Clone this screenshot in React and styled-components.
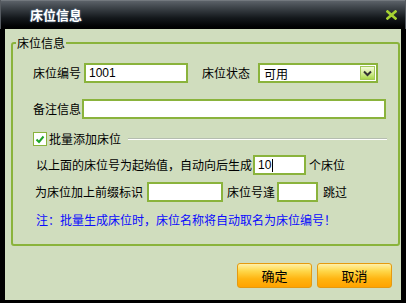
import React from 'react';
import styled, { createGlobalStyle } from 'styled-components';

const GlobalStyle = createGlobalStyle`
  html, body {
    margin: 0;
    padding: 0;
    background: #000;
  }
  body {
    font-family: "Liberation Sans", "Noto Sans CJK SC", sans-serif;
    font-size: 12px;
  }
`;

const Window = styled.div`
  width: 406px;
  height: 303px;
  background: #000;
  display: flex;
  flex-direction: column;
  box-sizing: border-box;
`;

const TitleBar = styled.div`
  height: 29px;
  flex: none;
  display: flex;
  align-items: center;
  justify-content: space-between;
  padding: 0 8px 0 29px;
  box-sizing: border-box;
  background: linear-gradient(to bottom, #8a8f94 0, #5b6168 1px, #3c4248 8px, #14181c 18px, #020304 26px, #000 100%);
  border-left: 1px solid #555a60;
  border-right: 1px solid #555a60;
`;

const Title = styled.div`
  color: #fff;
  font-family: "Noto Sans CJK SC", sans-serif;
  font-weight: bold;
  font-size: 13px;
  line-height: 15px;
  text-shadow: 0 0 2px #6d8fb8;
`;

const Close = styled.svg`
  width: 11px;
  height: 10px;
  margin-top: 1px;
`;

const Body = styled.div`
  flex: 1;
  margin: 0 5px 3px 5px;
  background: #d0ddbe;
  display: flex;
  flex-direction: column;
`;

const Fieldset = styled.fieldset`
  margin: 7px 1px 0 6px;
  padding: 0 0 16px 0;
  border: 2px solid #8ab33c;
  border-radius: 3px;
  min-width: 0;
`;

const Legend = styled.legend`
  margin-left: 3px;
  padding: 0 1px;
  font-family: "Noto Sans CJK SC", sans-serif;
  font-size: 12px;
  line-height: 14px;
  color: #000;
`;

const Content = styled.div`
  padding: 13px 0 0 20px;
  display: flex;
  flex-direction: column;
`;

const Row = styled.div`
  display: flex;
  align-items: center;
  height: ${p => p.$h || 20}px;
  margin-top: ${p => p.$mt || 0}px;
  padding-left: ${p => p.$pl || 0}px;
`;

const Label = styled.span`
  font-family: "Noto Sans CJK SC", sans-serif;
  font-size: 12px;
  line-height: 14px;
  color: ${p => p.$color || '#000'};
  white-space: nowrap;
  margin-right: ${p => p.$mr || 0}px;
`;

const Input = styled.div`
  width: ${p => p.$w}px;
  height: 20px;
  box-sizing: border-box;
  border: 2px solid #8ab33c;
  background: #fff;
  font-family: "Liberation Sans", sans-serif;
  font-size: 12px;
  line-height: 16px;
  padding-left: 3px;
  display: flex;
  align-items: center;
  margin-right: ${p => p.$mr || 0}px;
`;

const Caret = styled.span`
  display: inline-block;
  width: 1px;
  height: 13px;
  background: #000;
  margin-left: 1px;
`;

const Select = styled.div`
  width: 120px;
  height: 20px;
  box-sizing: border-box;
  border: 2px solid #8ab33c;
  background: #fff;
  display: flex;
  align-items: center;
  justify-content: space-between;
  padding: 0 1px 0 4px;
  font-family: "Noto Sans CJK SC", sans-serif;
  font-size: 12px;
`;

const ArrowBtn = styled.div`
  width: 15px;
  height: 14px;
  box-sizing: border-box;
  border: 1px solid #a3c85a;
  background: linear-gradient(to bottom, #f2fad8 0, #d6ee9a 50%, #a9d94a 100%);
  display: flex;
  align-items: center;
  justify-content: center;
`;

const Check = styled.div`
  width: 14px;
  height: 14px;
  box-sizing: border-box;
  border: 1px solid #8ab33c;
  background: #fff;
  display: flex;
  align-items: center;
  justify-content: center;
  margin-right: 2px;
`;

const Rule = styled.div`
  flex: none;
  width: 259px;
  margin-left: 7px;
  border-top: 1px solid #b5bdb0;
  border-bottom: 1px solid #fff;
`;

const Buttons = styled.div`
  display: flex;
  justify-content: flex-end;
  gap: 5px;
  margin: 17px 9px 0 0;
`;

const Button = styled.button`
  width: 75px;
  height: 25px;
  box-sizing: border-box;
  border: 1px solid #e59a10;
  border-radius: 3px;
  background: linear-gradient(to bottom, #fff0a8 0, #ffd84a 30%, #ffb410 65%, #ffa300 100%);
  font-family: "Noto Sans CJK SC", sans-serif;
  font-size: 13px;
  color: #000;
  padding: 0;
  line-height: 23px;
`;

export default function App() {
  return (
    <>
      <GlobalStyle />
      <Window>
        <TitleBar>
          <Title>床位信息</Title>
          <Close viewBox="0 0 11 10">
            <path d="M1.5 1.5 L9.5 8.5 M9.5 1.5 L1.5 8.5" stroke="#a6d232" strokeWidth="2.6" strokeLinecap="square" />
          </Close>
        </TitleBar>
        <Body>
          <Fieldset>
            <Legend>床位信息</Legend>
            <Content>
              <Row>
                <Label $mr={3}>床位编号</Label>
                <Input $w={104} $mr={14}>1001</Input>
                <Label $mr={8}>床位状态</Label>
                <Select>
                  <span>可用</span>
                  <ArrowBtn>
                    <svg width="9" height="7" viewBox="0 0 9 7">
                      <path d="M1 1.5 L4.5 5 L8 1.5" fill="none" stroke="#333" strokeWidth="2" />
                    </svg>
                  </ArrowBtn>
                </Select>
              </Row>
              <Row $mt={16}>
                <Label $mr={1}>备注信息</Label>
                <Input $w={304} />
              </Row>
              <Row $mt={13} $h={14}>
                <Check>
                  <svg width="10" height="9" viewBox="0 0 10 9">
                    <path d="M1.5 4.5 L4 7 L8.5 1.5" fill="none" stroke="#1fa32a" strokeWidth="2" />
                  </svg>
                </Check>
                <Label>批量添加床位</Label>
                <Rule />
              </Row>
              <Row $mt={9} $pl={3}>
                <Label $mr={1}>以上面的床位号为起始值，自动向后生成</Label>
                <Input $w={53} $mr={3}>10<Caret /></Input>
                <Label>个床位</Label>
              </Row>
              <Row $mt={7} $pl={2}>
                <Label $mr={4}>为床位加上前缀标识</Label>
                <Input $w={76} $mr={4}></Input>
                <Label $mr={2}>床位号逢</Label>
                <Input $w={41} $mr={5}></Input>
                <Label>跳过</Label>
              </Row>
              <Row $mt={10} $h={16} $pl={3}>
                <Label $color="#0a0aff">注：批量生成床位时，床位名称将自动取名为床位编号！</Label>
              </Row>
            </Content>
          </Fieldset>
          <Buttons>
            <Button>确定</Button>
            <Button>取消</Button>
          </Buttons>
        </Body>
      </Window>
    </>
  );
}
